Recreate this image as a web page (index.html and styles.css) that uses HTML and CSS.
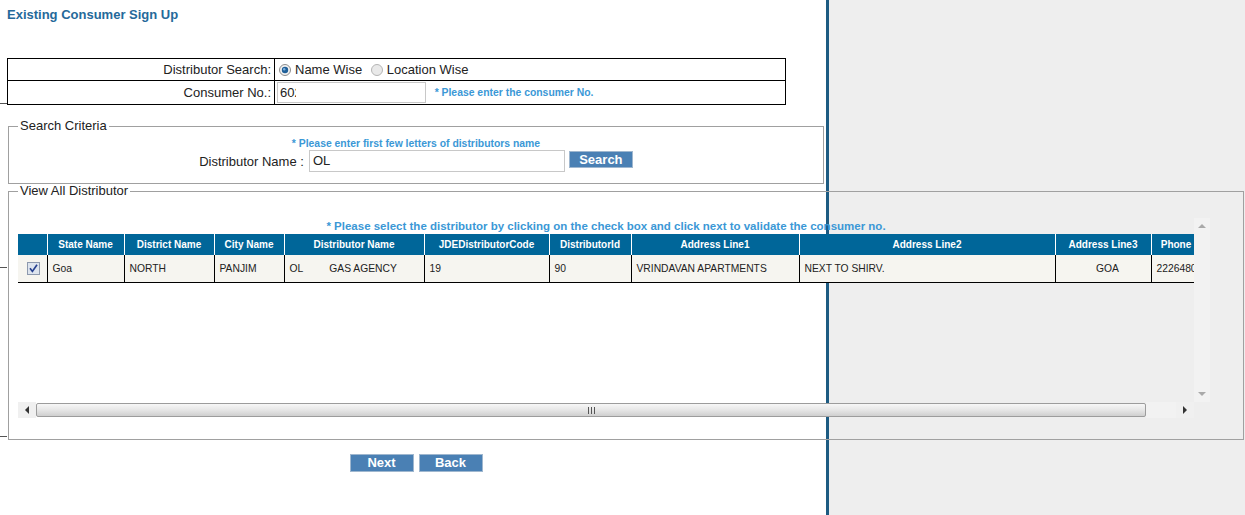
FILE: index.html
```html
<!DOCTYPE html>
<html lang="en">
<head>
    <meta charset="UTF-8">
    <meta name="viewport" content="width=device-width, initial-scale=1.0">
    <title>Existing Consumer Sign Up</title>
    <link rel="stylesheet" href="styles.css">
</head>
<body>
    <div class="page-title">Existing Consumer Sign Up</div>

    <table class="form-table">
        <tr class="row-search">
            <td class="label">Distributor Search:</td>
            <td class="field">
                <label class="radio">
                    <svg class="radio-dot" width="12" height="12" viewBox="0 0 12 12">
                        <circle cx="6" cy="6" r="5.5" fill="#f1f1f1" stroke="#8c8c8c"/>
                        <circle cx="6" cy="6" r="3.2" fill="#1f5f98"/>
                        <circle cx="5.2" cy="5.2" r="1.2" fill="#7fb2e0"/>
                    </svg>Name Wise
                </label>
                <label class="radio">
                    <svg class="radio-dot" width="12" height="12" viewBox="0 0 12 12">
                        <circle cx="6" cy="6" r="5.5" fill="#e9e9e9" stroke="#b4b4b4"/>
                    </svg>Location Wise
                </label>
            </td>
        </tr>
        <tr class="row-consumer">
            <td class="label">Consumer No.:</td>
            <td class="field">
                <span class="textbox consumer-no"><span class="clip">602</span></span>
                <span class="note">* Please enter the consumer No.</span>
            </td>
        </tr>
    </table>

    <fieldset class="box search-box">
        <legend>Search Criteria</legend>
        <div class="note center">* Please enter first few letters of distributors name</div>
        <div class="search-row">
            <span class="search-label">Distributor Name :</span>
            <span class="textbox dist-name">OL</span>
            <span class="btn btn-search">Search</span>
        </div>
    </fieldset>

    <fieldset class="box result-box">
        <legend>View All Distributor</legend>
        <div class="scroller">
            <div class="viewport">
                <div class="note center grid-note">* Please select the distributor by clicking on the check box and click next to validate the consumer no.</div>
                <table class="grid">
                    <colgroup>
                        <col style="width: 29px">
                        <col style="width: 77px">
                        <col style="width: 90px">
                        <col style="width: 70px">
                        <col style="width: 140px">
                        <col style="width: 125px">
                        <col style="width: 82px">
                        <col style="width: 168px">
                        <col style="width: 256px">
                        <col style="width: 96px">
                        <col style="width: 50px">
                    </colgroup>
                    <tr>
                        <th></th>
                        <th>State Name</th>
                        <th>District Name</th>
                        <th>City Name</th>
                        <th>Distributor Name</th>
                        <th>JDEDistributorCode</th>
                        <th>DistributorId</th>
                        <th>Address Line1</th>
                        <th>Address Line2</th>
                        <th>Address Line3</th>
                        <th>Phone</th>
                    </tr>
                    <tr>
                        <td class="chk-cell">
                            <svg class="chk" width="13" height="13" viewBox="0 0 13 13">
                                <rect x="0.5" y="0.5" width="12" height="12" fill="#dde4ee" stroke="#8d99ae"/>
                                <path d="M3 6.2 L5.4 9.4 L10 2.8" fill="none" stroke="#26408f" stroke-width="1.7"/>
                            </svg>
                        </td>
                        <td>Goa</td>
                        <td>NORTH</td>
                        <td>PANJIM</td>
                        <td>OL<span class="gap"></span>GAS AGENCY</td>
                        <td>19</td>
                        <td>90</td>
                        <td>VRINDAVAN APARTMENTS</td>
                        <td>NEXT TO SHIRV.</td>
                        <td class="mid">GOA</td>
                        <td>2226480</td>
                    </tr>
                </table>
            </div>
            <div class="vbar">
                <span class="arrow arrow-up"></span>
                <span class="vtrack"></span>
                <span class="arrow arrow-down"></span>
            </div>
            <div class="hbar">
                <span class="hbtn"><span class="arrow arrow-left"></span></span>
                <span class="thumb"><span class="grip"></span></span>
                <span class="htrack"></span>
                <span class="hbtn"><span class="arrow arrow-right"></span></span>
            </div>
            <div class="corner"></div>
        </div>
    </fieldset>

    <div class="actions">
        <span class="btn">Next</span>
        <span class="btn">Back</span>
    </div>
</body>
</html>
```

FILE: styles.css
```css
/* page */
body {
    margin: 0;
    min-height: 515px;
    font-family: "Liberation Sans", Arial, sans-serif;
    font-size: 13px;
    color: #222;
    background:
        linear-gradient(#555, #555) 0 103px / 7px 1px no-repeat,
        linear-gradient(#555, #555) 0 267px / 7px 1px no-repeat,
        linear-gradient(#555, #555) 0 436px / 7px 1px no-repeat,
        linear-gradient(to right, #fff 0 826px, #1d5b82 826px 829px, #eeeeee 829px);
}

.page-title {
    margin: 7px 0 0 7px;
    line-height: 15px;
    font-weight: bold;
    color: #25699a;
}

.note {
    font-size: 10.4px;
    font-weight: bold;
    color: #3b98d6;
}

.center {
    text-align: center;
}

/* top form */
.form-table {
    margin: 36px 0 0 7px;
    width: 779px;
    border-collapse: collapse;
}

.form-table td {
    border: 1px solid #000;
    padding: 0;
    vertical-align: middle;
}

.row-search td {
    height: 21px;
}

.row-consumer td {
    height: 23px;
}

.form-table .label {
    width: 263px;
    padding-right: 3px;
    text-align: right;
}

.form-table .field {
    padding-left: 3px;
}

.radio {
    display: inline-flex;
    align-items: center;
    margin-right: 4px;
    vertical-align: -2px;
}

.radio-dot {
    margin: 0 4px 0 1px;
}

.textbox {
    display: inline-block;
    box-sizing: border-box;
    border: 1px solid #c8c8c8;
    background: #fff;
    vertical-align: middle;
}

.consumer-no {
    width: 149px;
    height: 21px;
    margin-left: -1px;
    padding-left: 2px;
    line-height: 19px;
}

.clip {
    display: inline-block;
    width: 16px;
    overflow: hidden;
    white-space: nowrap;
    vertical-align: top;
}

.field .note {
    margin-left: 5px;
    vertical-align: middle;
}

/* fieldsets */
.box {
    margin: 14px 0 0 8px;
    padding: 0 9px;
    border: 1px solid #a0a0a0;
    box-sizing: border-box;
    min-width: 0;
}

.box legend {
    padding: 0 2px;
    font-size: 13px;
    line-height: 14px;
}

.search-box {
    width: 816px;
    padding-bottom: 11px;
}

.search-box .note {
    margin-top: 5px;
    line-height: 12px;
}

.search-row {
    display: flex;
    justify-content: center;
    align-items: center;
}

.search-label {
    margin-right: 5px;
}

.dist-name {
    width: 256px;
    height: 22px;
    padding-left: 3px;
    line-height: 20px;
}

.btn {
    display: inline-block;
    box-sizing: border-box;
    width: 64px;
    height: 18px;
    background-color: #4a80b4;
    border: 1px solid #9fb7cf;
    color: #fff;
    font-weight: bold;
    font-size: 13px;
    line-height: 16px;
    text-align: center;
}

.btn-search {
    height: 17px;
    line-height: 15px;
    margin: 0 0 3px 4px;
}

.result-box {
    width: 1236px;
    margin-top: 0;
    padding-bottom: 21px;
}

/* grid with scrollbars */
.scroller {
    margin-top: 20px;
    display: grid;
    grid-template-columns: 1176px 16px;
    grid-template-rows: 184px 16px;
}

.viewport {
    overflow: hidden;
}

.grid-note {
    font-size: 11.5px;
    line-height: 16px;
}

.grid {
    table-layout: fixed;
    width: 1183px;
    border-collapse: collapse;
    font-size: 10px;
}

.grid th {
    height: 21px;
    padding: 0;
    background-color: #006699;
    color: #fff;
    font-weight: bold;
    text-align: center;
    border-right: 1px solid #fff;
    white-space: nowrap;
    overflow: hidden;
}

.grid td {
    height: 27px;
    padding: 0 5px;
    font-size: 10.3px;
    background-color: #f6f5f0;
    border-right: 1px solid #000;
    border-bottom: 1px solid #000;
    white-space: nowrap;
    overflow: hidden;
}

.grid .chk-cell {
    padding: 0;
    text-align: center;
}

.chk {
    display: inline-block;
    vertical-align: middle;
    margin-left: 2px;
}

.grid .mid {
    text-align: center;
    padding-left: 14px;
}

.gap {
    display: inline-block;
    width: 26px;
}

.vbar {
    display: flex;
    flex-direction: column;
    background-color: rgba(255, 255, 255, 0.25);
}

.vtrack {
    flex: 1;
}

.hbar {
    display: flex;
    align-items: stretch;
}

.hbtn {
    width: 18px;
    display: flex;
    align-items: center;
    justify-content: center;
    background-color: #f0f0f0;
}

.thumb {
    width: 1110px;
    box-sizing: border-box;
    margin: 1px 0;
    border: 1px solid #9c9c9c;
    border-radius: 2px;
    background: linear-gradient(#f7f7f7, #e6e6e6 50%, #cfcfcf);
    display: flex;
    align-items: center;
    justify-content: center;
}

.grip {
    width: 7px;
    height: 7px;
    background: linear-gradient(to right, #555 0 1px, transparent 1px 3px, #555 3px 4px, transparent 4px 6px, #555 6px 7px);
}

.htrack {
    flex: 1;
    background-color: #f2f2f2;
}

.arrow {
    width: 0;
    height: 0;
    border: 4px solid transparent;
}

.arrow-up,
.arrow-down {
    align-self: center;
    margin: 6px 0;
}

.arrow-up {
    border-top: none;
    border-bottom: 4px solid #a9a9a9;
}

.arrow-down {
    border-bottom: none;
    border-top: 4px solid #a9a9a9;
}

.arrow-left {
    border-left: none;
    border-right: 4px solid #333;
}

.arrow-right {
    border-right: none;
    border-left: 4px solid #333;
}

/* bottom buttons */
.actions {
    width: 816px;
    margin: 14px 0 0 8px;
    display: flex;
    justify-content: center;
    gap: 5px;
}
```
